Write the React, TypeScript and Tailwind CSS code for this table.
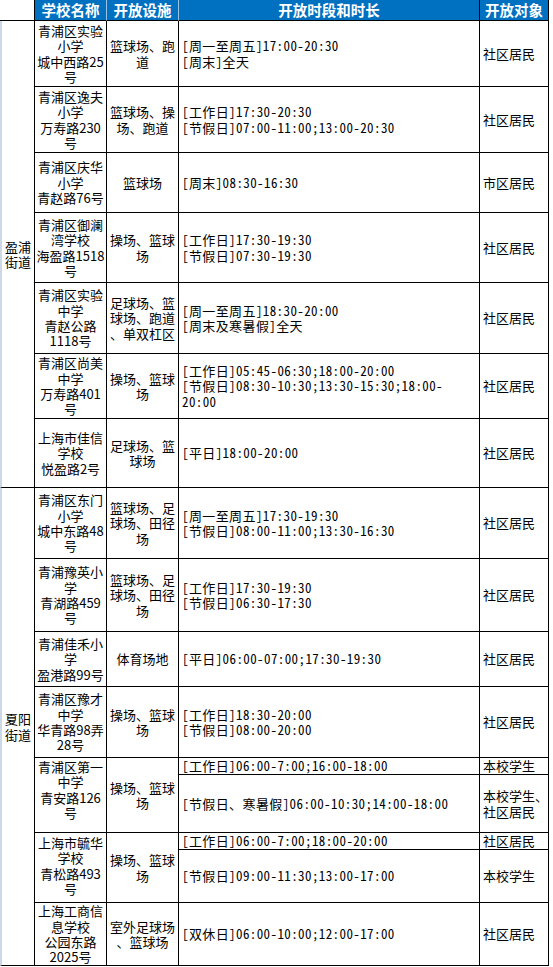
import React from "react";

type Slot = { time: string[]; aud: string[]; h: string };
type School = { name: string[]; fac: string[]; slots: Slot[]; nameCls?: string };
type Street = { name: string[]; schools: School[] };

const one = (time: string[], h: string, aud = "社区居民"): Slot[] => [{ time, aud: [aud], h }];

const streets: Street[] = [
  {
    name: ["盈浦", "街道"],
    schools: [
      {
        name: ["青浦区实验", "小学", "城中西路25", "号"],
        fac: ["篮球场、跑", "道"],
        slots: one(["[周一至周五]17:00-20:30", "[周末]全天"], "h-[66px]"),
      },
      {
        name: ["青浦区逸夫", "小学", "万寿路230", "号"],
        fac: ["篮球场、操", "场、跑道"],
        slots: one(["[工作日]17:30-20:30", "[节假日]07:00-11:00;13:00-20:30"], "h-[66px]"),
      },
      {
        name: ["青浦区庆华", "小学", "青赵路76号"],
        fac: ["篮球场"],
        slots: one(["[周末]08:30-16:30"], "h-[60px]", "市区居民"),
      },
      {
        name: ["青浦区御澜", "湾学校", "海盈路1518", "号"],
        fac: ["操场、篮球", "场"],
        slots: one(["[工作日]17:30-19:30", "[节假日]07:30-19:30"], "h-[70px]"),
      },
      {
        name: ["青浦区实验", "中学", "青赵公路", "1118号"],
        fac: ["足球场、篮", "球场、跑道", "、单双杠区"],
        slots: one(["[周一至周五]18:30-20:00", "[周末及寒暑假]全天"], "h-[71px]"),
      },
      {
        name: ["青浦区尚美", "中学", "万寿路401", "号"],
        fac: ["操场、篮球", "场"],
        slots: one(
          ["[工作日]05:45-06:30;18:00-20:00", "[节假日]08:30-10:30;13:30-15:30;18:00-", "20:00"],
          "h-[65px]"
        ),
      },
      {
        name: ["上海市佳信", "学校", "悦盈路2号"],
        fac: ["足球场、篮", "球场"],
        slots: one(["[平日]18:00-20:00"], "h-[69px]"),
      },
    ],
  },
  {
    name: ["夏阳", "街道"],
    schools: [
      {
        name: ["青浦区东门", "小学", "城中东路48", "号"],
        fac: ["篮球场、足", "球场、田径", "场"],
        slots: one(["[周一至周五]17:30-19:30", "[节假日]08:00-11:00;13:30-16:30"], "h-[71px]"),
      },
      {
        name: ["青浦豫英小", "学", "青湖路459", "号"],
        fac: ["篮球场、足", "球场、田径", "场"],
        slots: one(["[工作日]17:30-19:30", "[节假日]06:30-17:30"], "h-[73px]"),
      },
      {
        name: ["青浦佳禾小", "学", "盈港路99号"],
        fac: ["体育场地"],
        slots: one(["[平日]06:00-07:00;17:30-19:30"], "h-[55px]"),
      },
      {
        name: ["青浦区豫才", "中学", "华青路98弄", "28号"],
        fac: ["操场、篮球", "场"],
        slots: one(["[工作日]18:30-20:00", "[节假日]08:00-20:00"], "h-[71px]"),
      },
      {
        name: ["青浦区第一", "中学", "青安路126", "号"],
        fac: ["操场、篮球", "场"],
        nameCls: "pb-[11px]",
        slots: [
          { time: ["[工作日]06:00-7:00;16:00-18:00"], aud: ["本校学生"], h: "h-[17px]" },
          { time: ["[节假日、寒暑假]06:00-10:30;14:00-18:00"], aud: ["本校学生、", "社区居民"], h: "h-[58px]" },
        ],
      },
      {
        name: ["上海市毓华", "学校", "青松路493", "号"],
        fac: ["操场、篮球", "场"],
        nameCls: "pb-[4px]",
        slots: [
          { time: ["[工作日]06:00-7:00;18:00-20:00"], aud: ["社区居民"], h: "h-[17px]" },
          { time: ["[节假日]09:00-11:30;13:00-17:00"], aud: ["本校学生"], h: "h-[53px]" },
        ],
      },
      {
        name: ["上海工商信", "息学校", "公园东路", "2025号"],
        fac: ["室外足球场", "、篮球场"],
        slots: one(["[双休日]06:00-10:00;12:00-17:00"], "h-[63px]"),
      },
    ],
  },
];

const Lines = ({ lines }: { lines: string[] }) => (
  <>
    {lines.map((l, i) => (
      <div key={i} className="whitespace-nowrap">
        {l}
      </div>
    ))}
  </>
);

const cell = "border-r border-b border-black p-0 align-middle";

export default function App() {
  const rows: React.ReactNode[] = [];

  streets.forEach((st, si) => {
    const span = st.schools.reduce((n, s) => n + s.slots.length, 0);
    st.schools.forEach((sc, ci) => {
      sc.slots.forEach((sl, li) => {
        rows.push(
          <tr key={`${si}-${ci}-${li}`} className={sl.h}>
            {ci === 0 && li === 0 && (
              <td rowSpan={span} className={`${cell} border-l-2 border-l-[#cdd8e6] text-center`}>
                <Lines lines={st.name} />
              </td>
            )}
            {li === 0 && (
              <td rowSpan={sc.slots.length} className={`${cell} text-center ${sc.nameCls ?? ""}`}>
                <Lines lines={sc.name} />
              </td>
            )}
            {li === 0 && (
              <td rowSpan={sc.slots.length} className={`${cell} text-center`}>
                <Lines lines={sc.fac} />
              </td>
            )}
            <td
              className={`${cell} pl-[3px] text-left tracking-[0.4px] font-['Noto_Sans_Mono_CJK_SC','Noto_Sans_CJK_SC',monospace]`}
            >
              <Lines lines={sl.time} />
            </td>
            <td className={`${cell} pl-[3px] text-left`}>
              <Lines lines={sl.aud} />
            </td>
          </tr>
        );
      });
    });
  });

  return (
    <div className="w-[553px] h-[967px] overflow-hidden bg-white">
      <table className="table-fixed border-separate border-spacing-0 w-[549px] text-[13px] leading-[15.4px] text-black font-['Noto_Sans_CJK_SC',sans-serif]">
        <colgroup>
          <col className="w-[35px]" />
          <col className="w-[72px]" />
          <col className="w-[72px]" />
          <col className="w-[301px]" />
          <col className="w-[69px]" />
        </colgroup>
        <thead>
          <tr className="h-[21px] text-[14.5px] leading-[18px] font-bold text-white">
            <th className="border-r border-b border-black bg-white p-0" />
            <th className="border-r border-b border-r-[#9cc3e6] border-b-black bg-[#0070c0] p-0 text-center">学校名称</th>
            <th className="border-r border-b border-r-[#9cc3e6] border-b-black bg-[#0070c0] p-0 text-center">开放设施</th>
            <th className="border-r border-b border-black bg-[#0070c0] p-0 text-center">开放时段和时长</th>
            <th className="border-r border-b border-black bg-[#0070c0] p-0 text-center">开放对象</th>
          </tr>
        </thead>
        <tbody>{rows}</tbody>
      </table>
    </div>
  );
}
